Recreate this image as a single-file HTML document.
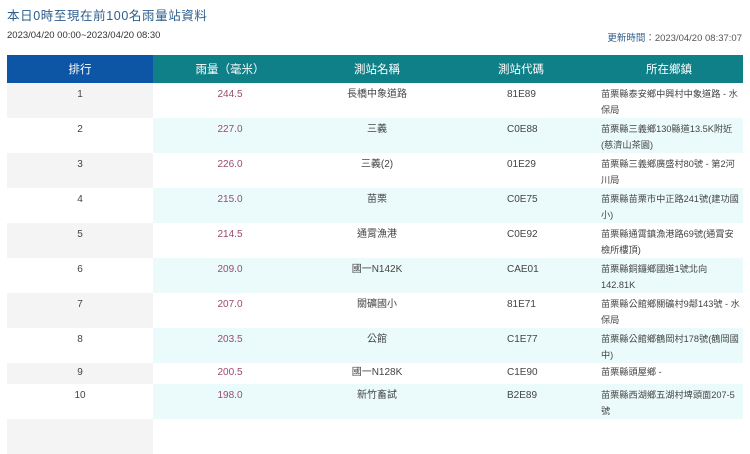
<!DOCTYPE html>
<html><head><meta charset="utf-8"><style>
body{margin:0;background:#fff;font-family:"Liberation Sans","Noto Sans CJK TC",sans-serif;width:750px;height:425px;overflow:hidden;position:relative}
.t{position:absolute;left:7px;top:5px;font-size:12.5px;color:#2b5d8c;letter-spacing:0.6px}
.d{position:absolute;left:7px;top:30px;font-size:9.5px;color:#333}
.u{position:absolute;right:8px;top:30px;font-size:9.5px;color:#555}
.u b{font-weight:normal;color:#2b5d8c}
table{position:absolute;left:7px;top:55px;width:736px;border-collapse:collapse;table-layout:fixed;font-size:10px;color:#444}
th{height:28px;background:#0f8088;color:#fff;font-weight:normal;font-size:11.5px;padding:0}
th.r{background:#0d56a6}
td{vertical-align:top;padding:4px 0 0;line-height:15.5px;text-align:center;box-sizing:border-box}
tr.a td{background:#fff}
tr.b td{background:#ebfbfb}
tr.a td:first-child{background:#f4f4f4}
tr.b td:first-child{background:#fff}
td.v{color:#9b4a72}
td.c{text-align:left;padding-left:60px}
td.w{text-align:left;padding-left:6px;padding-right:0;white-space:nowrap;font-size:9.2px}
tr.h{height:28px}
tr{height:35px}
tr.s{height:21px}
</style></head><body>
<div class="t">本日0時至現在前100名雨量站資料</div>
<div class="d">2023/04/20 00:00~2023/04/20 08:30</div>
<div class="u"><b>更新時間</b>：2023/04/20 08:37:07</div>
<table>
<colgroup><col style="width:146px"><col style="width:154px"><col style="width:140px"><col style="width:148px"><col style="width:148px"></colgroup>
<tr class="h"><th class="r">排行</th><th>雨量（毫米）</th><th>測站名稱</th><th>測站代碼</th><th>所在鄉鎮</th></tr>
<tr class="a"><td>1</td><td class="v">244.5</td><td>長橋中象道路</td><td class="c">81E89</td><td class="w">苗栗縣泰安鄉中興村中象道路 - 水<br>保局</td></tr>
<tr class="b"><td>2</td><td class="v">227.0</td><td>三義</td><td class="c">C0E88</td><td class="w">苗栗縣三義鄉130縣道13.5K附近<br>(慈濟山茶園)</td></tr>
<tr class="a"><td>3</td><td class="v">226.0</td><td>三義(2)</td><td class="c">01E29</td><td class="w">苗栗縣三義鄉廣盛村80號 - 第2河<br>川局</td></tr>
<tr class="b"><td>4</td><td class="v">215.0</td><td>苗栗</td><td class="c">C0E75</td><td class="w">苗栗縣苗栗市中正路241號(建功國<br>小)</td></tr>
<tr class="a"><td>5</td><td class="v">214.5</td><td>通霄漁港</td><td class="c">C0E92</td><td class="w">苗栗縣通霄鎮漁港路69號(通霄安<br>檢所樓頂)</td></tr>
<tr class="b"><td>6</td><td class="v">209.0</td><td>國一N142K</td><td class="c">CAE01</td><td class="w">苗栗縣銅鑼鄉國道1號北向<br>142.81K</td></tr>
<tr class="a"><td>7</td><td class="v">207.0</td><td>關礦國小</td><td class="c">81E71</td><td class="w">苗栗縣公館鄉關礦村9鄰143號 - 水<br>保局</td></tr>
<tr class="b"><td>8</td><td class="v">203.5</td><td>公館</td><td class="c">C1E77</td><td class="w">苗栗縣公館鄉鶴岡村178號(鶴岡國<br>中)</td></tr>
<tr class="a s"><td style="padding-top:2px">9</td><td class="v" style="padding-top:2px">200.5</td><td style="padding-top:2px">國一N128K</td><td class="c" style="padding-top:2px">C1E90</td><td class="w" style="padding-top:2px">苗栗縣頭屋鄉 -</td></tr>
<tr class="b"><td>10</td><td class="v">198.0</td><td>新竹畜試</td><td class="c">B2E89</td><td class="w">苗栗縣西湖鄉五湖村埤頭面207-5<br>號</td></tr>
<tr class="a"><td></td><td></td><td></td><td></td><td></td></tr>
</table>
</body></html>
